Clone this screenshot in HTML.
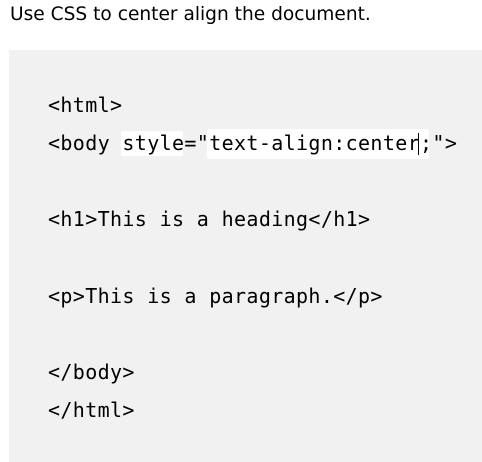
<!DOCTYPE html>
<html><head><style>
html,body{margin:0;padding:0;background:#fff;width:482px;height:462px;overflow:hidden;position:relative}
.t{position:absolute;left:10px;top:4px;font-family:"DejaVu Sans",Verdana,sans-serif;font-size:18.6px;color:#000;white-space:nowrap}
.box{position:absolute;left:9px;top:50px;width:473px;height:412px;background:#f1f1f1}
.w{position:absolute;background:#fff;border-radius:2px}
.c{position:absolute;left:48px;font-family:"DejaVu Sans Mono","Liberation Mono",monospace;font-size:20px;letter-spacing:0.36px;color:#000;white-space:pre;line-height:24px}
.cur{position:absolute;left:418px;top:133px;width:1px;height:22px;background:#000}
</style></head><body>
<div class="t">Use CSS to center align the document.</div>
<div class="box"></div>
<div class="w" style="left:121px;top:131px;width:62px;height:25px"></div>
<div class="w" style="left:207px;top:129px;width:222px;height:30px"></div>
<div class="c" style="top:93px">&lt;html&gt;</div>
<div class="c" style="top:131px">&lt;body style="text-align:center;"&gt;</div>
<div class="cur"></div>
<div class="c" style="top:207px">&lt;h1&gt;This is a heading&lt;/h1&gt;</div>
<div class="c" style="top:284px">&lt;p&gt;This is a paragraph.&lt;/p&gt;</div>
<div class="c" style="top:360px">&lt;/body&gt;</div>
<div class="c" style="top:398px">&lt;/html&gt;</div>
</body></html>
